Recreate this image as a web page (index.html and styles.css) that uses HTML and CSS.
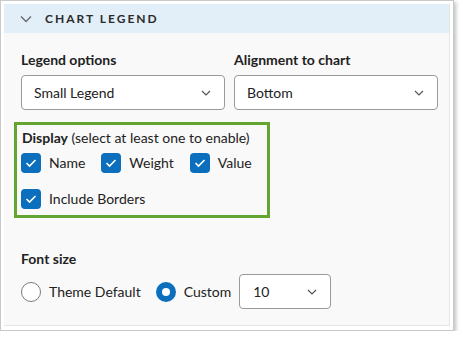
FILE: index.html
```html
<!DOCTYPE html>
<html lang="en">
<head>
  <meta charset="UTF-8" />
  <title>Chart Legend</title>
  <link rel="stylesheet" href="styles.css">
</head>
<body>
  <div class="frame">
    <div class="panel">
      <div class="panel-header">
        <svg class="chevron" width="12" height="8" viewBox="0 0 12 8">
          <path d="M1 1.5 L6 6.5 L11 1.5" fill="none" stroke="#6b6b6b" stroke-width="1.4"/>
        </svg>
        <span class="panel-title">Chart Legend</span>
      </div>

      <div class="panel-body">
        <div class="field-row">
          <div class="field">
            <label class="field-label">Legend options</label>
            <div class="select">
              <span>Small Legend</span>
              <svg class="select-arrow" width="10" height="6" viewBox="0 0 10 6"><path d="M1 1 L5 5 L9 1" fill="none" stroke="#555" stroke-width="1.2"/></svg>
            </div>
          </div>
          <div class="field">
            <label class="field-label">Alignment to chart</label>
            <div class="select">
              <span>Bottom</span>
              <svg class="select-arrow" width="10" height="6" viewBox="0 0 10 6"><path d="M1 1 L5 5 L9 1" fill="none" stroke="#555" stroke-width="1.2"/></svg>
            </div>
          </div>
        </div>

        <div class="highlight">
          <p class="display-title"><b>Display</b> (select at least one to enable)</p>
          <div class="checks">
            <label class="check"><span class="box"><svg width="12" height="10" viewBox="0 0 12 10"><path d="M1.5 5 L4.5 8 L10.5 2" fill="none" stroke="#fff" stroke-width="1.6"/></svg></span>Name</label>
            <label class="check"><span class="box"><svg width="12" height="10" viewBox="0 0 12 10"><path d="M1.5 5 L4.5 8 L10.5 2" fill="none" stroke="#fff" stroke-width="1.6"/></svg></span>Weight</label>
            <label class="check"><span class="box"><svg width="12" height="10" viewBox="0 0 12 10"><path d="M1.5 5 L4.5 8 L10.5 2" fill="none" stroke="#fff" stroke-width="1.6"/></svg></span>Value</label>
          </div>
          <div class="checks">
            <label class="check"><span class="box"><svg width="12" height="10" viewBox="0 0 12 10"><path d="M1.5 5 L4.5 8 L10.5 2" fill="none" stroke="#fff" stroke-width="1.6"/></svg></span>Include Borders</label>
          </div>
        </div>

        <div class="font-size">
          <label class="field-label">Font size</label>
          <div class="radios">
            <label class="radio"><span class="dot"></span>Theme Default</label>
            <label class="radio"><span class="dot on"></span>Custom</label>
            <div class="select small">
              <span>10</span>
              <svg class="select-arrow" width="10" height="6" viewBox="0 0 10 6"><path d="M1 1 L5 5 L9 1" fill="none" stroke="#555" stroke-width="1.2"/></svg>
            </div>
          </div>
        </div>
      </div>
    </div>
  </div>
</body>
</html>
```

FILE: styles.css
```css
body {
  margin: 0;
  background: #ffffff;
  font-family: Lato, "Noto Sans", sans-serif;
  color: #222;
}

.frame {
  width: 446px;
  height: 323px;
  padding: 3px;
  border: 1px solid #c9c9c9;
  background: #ffffff;
  box-shadow: 2px 2px 4px rgba(0,0,0,0.25);
}

.panel {
  height: 322px;
  box-sizing: border-box;
  background: #f9f9f9;
  border-bottom: 1px solid #e6e6e6;
  border-right: 1px solid #e6e6e6;
}

.panel-header {
  height: 29px;
  display: flex;
  align-items: center;
  background: #e3eff8;
  padding-left: 16px;
}

.chevron {
  margin-right: 13px;
}

.panel-title {
  font-size: 12px;
  font-weight: bold;
  text-transform: uppercase;
  letter-spacing: 2px;
  color: #2b2b2b;
}

.panel-body {
  padding: 18px 11px 0 17px;
}

.field-row {
  display: flex;
  gap: 9px;
}

.field {
  flex: 1;
}

.field-label {
  display: block;
  font-size: 14px;
  font-weight: bold;
  line-height: 17px;
  margin-bottom: 7px;
}

.select {
  height: 35px;
  box-sizing: border-box;
  border: 1px solid #9a9a9a;
  border-radius: 4px;
  background: #fff;
  display: flex;
  align-items: center;
  justify-content: space-between;
  padding: 0 13px 0 12px;
  font-size: 14px;
}

.select.small {
  width: 92px;
  padding-left: 13px;
  padding-right: 13px;
}

.highlight {
  margin: 12px 0 0 -7px;
  width: 242px;
  border: 3px solid #64a431;
  padding: 4px 4px 6px 4px;
}

.display-title {
  margin: 0 0 7px 1px;
  font-size: 14px;
  line-height: 17px;
}

.checks {
  display: flex;
  gap: 16px;
  margin-bottom: 16px;
}

.checks:last-child {
  margin-bottom: 0;
}

.check {
  display: flex;
  align-items: center;
  gap: 8px;
  font-size: 14px;
  line-height: 20px;
}

.box {
  width: 20px;
  height: 20px;
  border-radius: 4px;
  background: #0b6fbd;
  display: flex;
  align-items: center;
  justify-content: center;
}

.font-size {
  margin-top: 32px;
}

.radios {
  display: flex;
  align-items: center;
}

.radio {
  display: flex;
  align-items: center;
  gap: 8px;
  font-size: 14px;
  margin-right: 15px;
}

.radio:nth-child(2) {
  margin-right: 8px;
}

.dot {
  width: 20px;
  height: 20px;
  box-sizing: border-box;
  border: 1px solid #7a7a7a;
  border-radius: 50%;
  background: #fff;
}

.dot.on {
  border: 6px solid #0b6fbd;
}
```
